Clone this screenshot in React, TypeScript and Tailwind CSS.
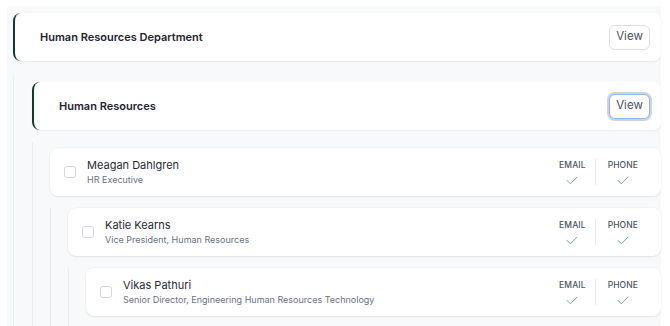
import React from 'react';

type Person = { name: string; title: string };

const people: Person[] = [
  { name: 'Meagan Dahlgren', title: 'HR Executive' },
  { name: 'Katie Kearns', title: 'Vice President, Human Resources' },
  { name: 'Vikas Pathuri', title: 'Senior Director, Engineering Human Resources Technology' },
];

function CheckMark() {
  return (
    <svg width="12" height="9" viewBox="0 0 12 9" fill="none" className="mt-[5px]">
      <path d="M1 4.4 L4.4 7.8 L11 1.2" stroke="#6aa898" strokeWidth="1" strokeLinecap="round" strokeLinejoin="round" />
    </svg>
  );
}

function ContactCol({ label, divider }: { label: string; divider?: boolean }) {
  return (
    <div className={`flex flex-col items-center ${divider ? 'border-l border-[#e6e8eb] pl-[12px]' : 'pr-[9px]'}`}>
      <span className="text-[8.5px] font-medium tracking-[0.1px] text-[#4b5563] leading-[12px]">{label}</span>
      <CheckMark />
    </div>
  );
}

function PersonRow({ people, index }: { people: Person[]; index: number }) {
  const p = people[index];
  if (!p) {
    return <div className="h-[20px]" />;
  }
  return (
    <div>
      <div className="h-[48px] rounded-lg bg-white shadow-[0_1px_2px_rgba(0,0,0,0.08),0_0_0_1px_rgba(0,0,0,0.02)] flex items-center pl-[14px] pr-[23px]">
        <div className="w-[12px] h-[12px] rounded-[3px] border border-[#d4d7dc] bg-white" />
        <div className="ml-[11px] flex-1 min-w-0">
          <div className="text-[11px] leading-[15px] text-[#262b36]">{p.name}</div>
          <div className="text-[9px] leading-[13px] text-[#6b7280]">{p.title}</div>
        </div>
        <div className="flex items-center">
          <ContactCol label="EMAIL" />
          <ContactCol label="PHONE" divider />
        </div>
      </div>
      <div className="mt-[12px] border-l border-[#eaecef] pl-[17px]">
        <PersonRow people={people} index={index + 1} />
      </div>
    </div>
  );
}

function GroupCard({ title, focused }: { title: string; focused?: boolean }) {
  return (
    <div className="h-[48px] rounded-lg border-l-2 border-[#123a31] bg-white shadow-[0_1px_2px_rgba(0,0,0,0.07)] flex items-center justify-between pl-[25px] pr-[11px]">
      <span className="text-[11px] font-semibold text-[#1f2430]">{title}</span>
      <button
        className={`h-[25px] w-[41px] rounded-md bg-white text-[11.5px] text-[#4b5160] border ${
          focused ? 'border-[#8db8f5] ring-2 ring-[#d0d3d8]' : 'border-[#dcdfe3]'
        }`}
      >
        View
      </button>
    </div>
  );
}

export default function App() {
  return (
    <div
      className="w-[670px] h-[326px] overflow-hidden bg-white"
      style={{ fontFamily: 'Inter, "Noto Sans", sans-serif' }}
    >
      <div className="ml-[7px] mt-[6px] w-[654px] h-[320px] bg-[#f8f9fa] pt-[7px] pl-[6px]">
        <GroupCard title="Human Resources Department" />
        <div className="mt-[14px] border-l border-[#eceef0] pt-[7px] pl-[18px]">
          <GroupCard title="Human Resources" focused />
          <div className="mt-[12px] border-l border-[#eaecef] pt-[6px] pl-[17px]">
            <PersonRow people={people} index={0} />
          </div>
        </div>
      </div>
    </div>
  );
}
